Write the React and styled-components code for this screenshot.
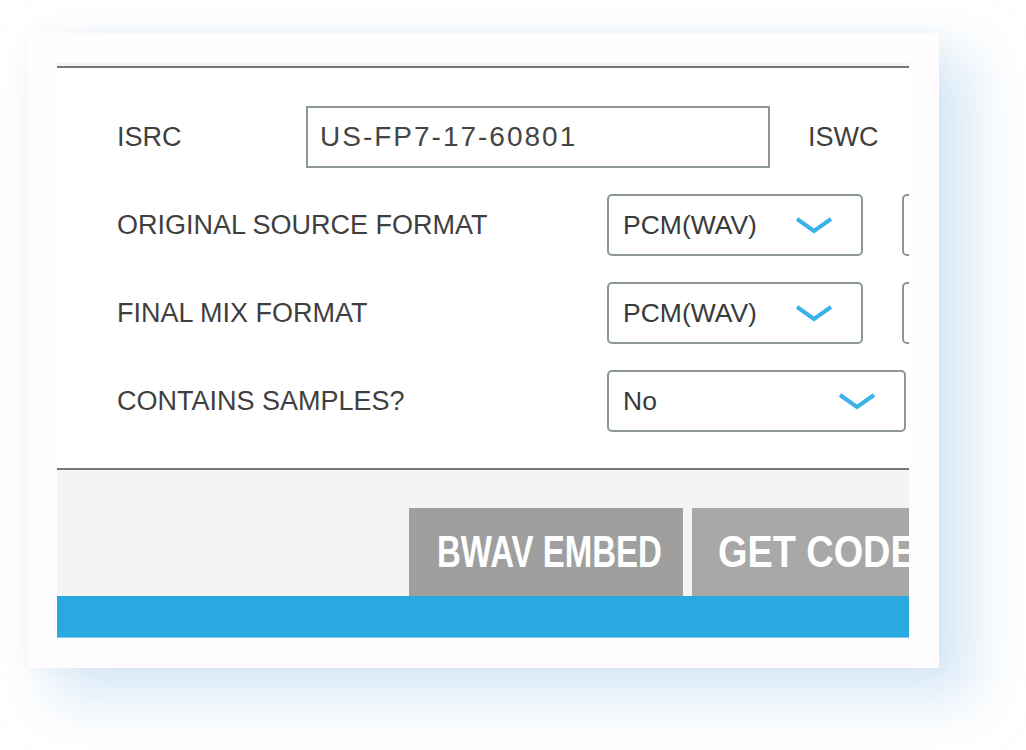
import React from 'react';
import styled, { createGlobalStyle } from 'styled-components';

const GlobalStyle = createGlobalStyle`
	html, body {
		margin: 0;
		padding: 0;
		background: #ffffff;
		font-family: "Liberation Sans", Arial, Helvetica, sans-serif;
	}
	* {
		box-sizing: border-box;
	}
`;

const Page = styled.div`
	width: 1026px;
	height: 750px;
	padding: 33px 0 0 27px;
	overflow: hidden;
`;

const Card = styled.div`
	width: 912px;
	height: 635px;
	padding: 30px;
	background: #fefcfd;
	box-shadow: 30px 26px 50px 4px rgba(175, 210, 240, 0.5),
		0 0 18px rgba(0, 0, 0, 0.03);
`;

const Panel = styled.div`
	width: 852px;
	height: 575px;
	overflow: hidden;
	background: #ffffff;
	display: flex;
	flex-direction: column;
`;

const TopBand = styled.div`
	height: 5px;
	flex-shrink: 0;
	background: #f4f4f4;
	border-bottom: 2px solid #777777;
`;

const Form = styled.div`
	padding: 38px 0 36px 60px;
	display: flex;
	flex-direction: column;
	gap: 26px;
`;

const Row = styled.div`
	display: flex;
	align-items: center;
	height: 62px;
	flex-shrink: 0;
`;

const Label = styled.span`
	width: ${props => props.width}px;
	margin-left: ${props => props.offset || 0}px;
	flex-shrink: 0;
	font-family: "Liberation Sans", Arial, sans-serif;
	font-size: 27px;
	color: #3f3f3f;
	white-space: nowrap;
`;

const TextInput = styled.div`
	width: 464px;
	height: 62px;
	flex-shrink: 0;
	border: 2px solid #8d9798;
	padding-left: 12px;
	display: flex;
	align-items: center;
	font-family: "Liberation Sans", Arial, sans-serif;
	font-size: 28px;
	letter-spacing: 2px;
	color: #454545;
`;

const Selects = styled.div`
	display: flex;
	gap: 39px;
	flex-shrink: 0;
`;

const Select = styled.div`
	width: ${props => props.width}px;
	height: 62px;
	flex-shrink: 0;
	border: 2px solid #8d9798;
	border-radius: 5px;
	padding: 0 28px 0 14px;
	display: flex;
	align-items: center;
	justify-content: space-between;
	font-family: "Liberation Sans", Arial, sans-serif;
	font-size: 26.5px;
	color: #3a3a3a;
`;

const Footer = styled.div`
	height: 128px;
	flex-shrink: 0;
	background: #f4f4f4;
	border-top: 2px solid #787878;
	padding: 38px 0 0 352px;
	display: flex;
	gap: 9px;
`;

const Button = styled.div`
	width: 274px;
	height: 88px;
	flex-shrink: 0;
	background: ${props => props.bg};
	padding-left: ${props => props.pad}px;
	display: flex;
	align-items: center;
	overflow: hidden;
`;

const ButtonText = styled.span`
	display: inline-block;
	font-family: "Liberation Sans", Arial, sans-serif;
	font-size: 44px;
	font-weight: 700;
	color: #ffffff;
	white-space: nowrap;
	transform: scaleX(${props => props.scale});
	transform-origin: left center;
`;

const BlueBar = styled.div`
	height: 42px;
	flex-shrink: 0;
	background: #29a9e0;
	border-bottom: 1px solid #7ccbef;
`;

const Chevron = () => (
	<svg width="38" height="18" viewBox="0 0 38 18">
		<polyline
			points="2,3 19,15 36,3"
			fill="none"
			stroke="#3cb1e8"
			strokeWidth="4"
		/>
	</svg>
);

const selectRows = [
	{ label: 'ORIGINAL SOURCE FORMAT', selects: [{ value: 'PCM(WAV)', width: 256 }, { value: '', width: 256 }] },
	{ label: 'FINAL MIX FORMAT', selects: [{ value: 'PCM(WAV)', width: 256 }, { value: '', width: 256 }] },
	{ label: 'CONTAINS SAMPLES?', selects: [{ value: 'No', width: 299 }] }
];

export default function App() {
	return (
		<>
			<GlobalStyle />
			<Page>
				<Card>
					<Panel>
						<TopBand />
						<Form>
							<Row>
								<Label width={189}>ISRC</Label>
								<TextInput>US-FP7-17-60801</TextInput>
								<Label width={120} offset={38}>ISWC</Label>
							</Row>
							{selectRows.map(row => (
								<Row key={row.label}>
									<Label width={490}>{row.label}</Label>
									<Selects>
										{row.selects.map((s, i) => (
											<Select key={i} width={s.width}>
												<span>{s.value}</span>
												<Chevron />
											</Select>
										))}
									</Selects>
								</Row>
							))}
						</Form>
						<Footer>
							<Button bg="#9f9f9f" pad={28}>
								<ButtonText scale={0.75}>BWAV EMBED</ButtonText>
							</Button>
							<Button bg="#a8a8a8" pad={26}>
								<ButtonText scale={0.86}>GET CODE</ButtonText>
							</Button>
						</Footer>
						<BlueBar />
					</Panel>
				</Card>
			</Page>
		</>
	);
}
